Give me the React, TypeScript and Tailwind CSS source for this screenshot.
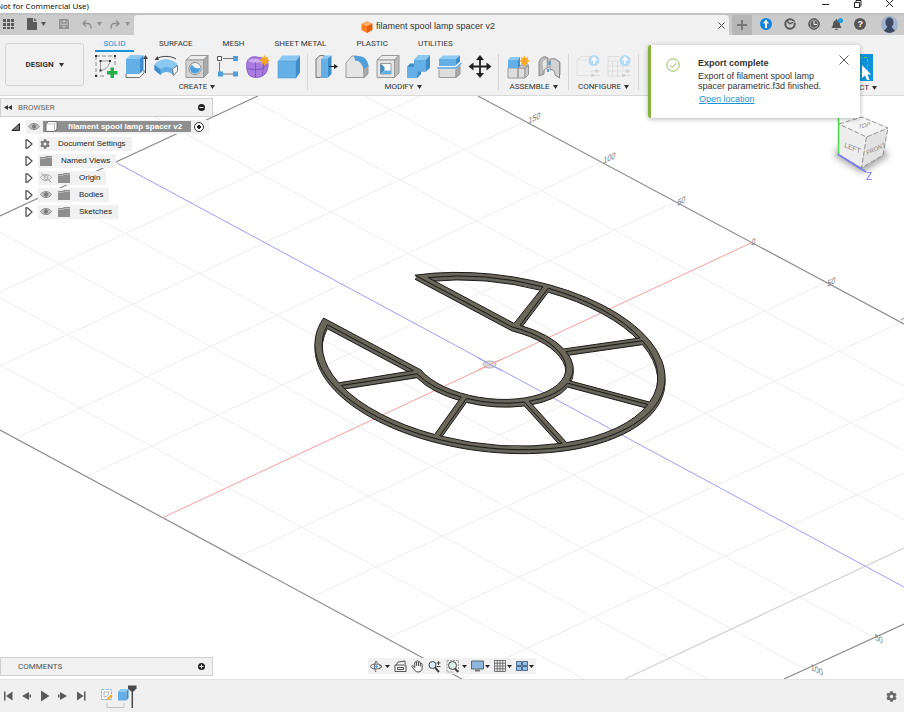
import React from "react";
import { FaBell, FaCog } from "react-icons/fa";

const UI = "font-['Roboto',sans-serif]";

/* ---------- small helpers ---------- */

function Caret() {
  return (
    <svg width="5" height="4" viewBox="0 0 5 4" aria-hidden="true">
      <path d="M0 0H5L2.500 4Z" fill="#333" />
    </svg>
  );
}

function Tool({ label, children }: { label: string; children: React.ReactNode }) {
  return (
    <button aria-label={label} className="flex h-[26px] items-center justify-center">
      <svg width="26" height="26" viewBox="0 0 26 26" fill="none" aria-hidden="true">
        {children}
      </svg>
    </button>
  );
}

function Group({ label, cols, children }: { label: string; cols: string; children: React.ReactNode }) {
  return (
    <section className="flex flex-col items-center">
      <div className={"grid " + cols}>{children}</div>
      <button className="flex h-[14px] items-center gap-[3px] text-[8px] text-[#333]">
        {label}
        <Caret />
      </button>
    </section>
  );
}

function Divider() {
  return <div className="h-[36px] w-px bg-[#d6d6d6]" />;
}

/* ---------- toolbar drawings ---------- */

const sketchIcon = (
  <>
    <path d="M4 2H23V12M4 2V22H14" stroke="#8a8a8a" strokeDasharray="4 2" />
    <path d="M8.500 7H18M8.500 7V16.500C13 16 17 13 18 7" stroke="#999" />
    <path d="M3 1h2v2H3zM22 1h2v2h-2zM3 21h2v2H3z" fill="#333" />
    <path d="M7.500 6h2v2h-2zM17 6h2v2h-2zM7.500 15.500h2v2h-2z" fill="#333" />
    <path d="M18.500 13.500h3.500v3.500h3.500v3.500H22V24h-3.500v-3.500H15V17h3.500z" fill="#27ae4b" />
  </>
);
const extrudeIcon = (
  <>
    <path d="M3 20V23.500H16.500L21 19V16" fill="#f4f4f4" stroke="#777" />
    <path d="M3 5L7 1H20L17 5Z" fill="#8cc9f2" />
    <path d="M3 5H16.500V20H3Z" fill="#64b0e6" />
    <path d="M16.500 5L20.500 1V16L16.500 20Z" fill="#3e8cc8" />
    <path d="M22.500 3.500V19" stroke="#444" />
    <path d="M22.500 1L25 5H20Z" fill="#444" />
  </>
);
const revolveIcon = (
  <>
    <path d="M1.500 11C4 7 9 5.500 13 5.500S22 7 24.500 11V16L20 21C17 17 10 17 7.500 21L1.500 16Z" fill="#64b0e6" />
    <path d="M1.500 11C4 7 9 5.500 13 5.500S22 7 24.500 11L19.500 15C16 12 11 12 7.500 15.500Z" fill="#8cc9f2" />
    <path d="M1.500 11L7.500 15.500V21L1.500 16Z" fill="#3e8cc8" />
    <path d="M19.500 15L24.500 11.500V17L20.500 21.500Z" fill="#fff" stroke="#777" />
    <path d="M3.500 5C8 1.500 18 1.500 23 5" stroke="#444" />
    <path d="M1.500 6L4.500 2L6 6Z" fill="#444" />
  </>
);
const holeIcon = (
  <>
    <path d="M2 6L7 1.500H24L19.500 6Z" fill="#eee" stroke="#999" />
    <path d="M19.500 6L24 1.500V19L19.500 23.500Z" fill="#aaa" stroke="#999" />
    <path d="M2 6H19.500V23.500H2Z" fill="#d4d4d4" stroke="#999" />
    <circle cx="11" cy="14.500" r="6" fill="#f4f4f4" stroke="#888" />
    <path d="M8 10.500A5 5 0 1 0 16 14C12 15 9 13 8 10.500Z" fill="#4d9fdc" />
  </>
);
const patternIcon = (
  <>
    <path d="M8 4.500H19M4.500 8V18M8 20H19" stroke="#777" />
    <path d="M2.500 2.500h4v4h-4z" fill="#fff" stroke="#555" />
    <path d="M18 2h5v5h-5zM3 17.500h5v5H3zM18 17.500h5v5h-5z" fill="#4d9fdc" />
  </>
);
const spark = "l1.200 2.800 2.600-1.400-1 3 3 .9-3 1.300 1 2.900-2.700-1.200-1.100 2.900-1.100-2.900-2.700 1.200 1-2.900-3-1.300 3-.9-1-3 2.600 1.400z";
const formIcon = (
  <>
    <path d="M2 8C3 4 7 2 12 3L22 5C24 10 23 17 20 20C15 25 7 24 4 21C2 18 1 12 2 8Z" fill="#a77be0" stroke="#8f64ca" />
    <path d="M3 7C8 4 14 4 18 8C13 9 8 9 3 7Z" fill="#cdaef3" />
    <path d="M2 14.500C8 16 14 16 18 14.500L22 11M10.500 8.500V23M18 8C19 13 18 18 17 22" stroke="#7a4fb5" strokeWidth=".8" />
    <path d={"M19.500 1" + spark} fill="#f5a623" />
  </>
);
const boxIcon = (
  <>
    <path d="M2 7L6 1.500H24L20 7Z" fill="#8cc9f2" />
    <path d="M2 7H20V24H2Z" fill="#64b0e6" stroke="#4d9fdc" strokeWidth=".6" />
    <path d="M20 7L24 1.500V18.500L20 24Z" fill="#3e8cc8" />
  </>
);
const pressPullIcon = (
  <>
    <path d="M3 5L7 1.500H11V20L7 23.500H3Z" fill="#ddd" stroke="#777" />
    <path d="M8 5L12 1.500H18L15 5Z" fill="#8cc9f2" />
    <path d="M8 5H14.500V24H8Z" fill="#64b0e6" />
    <path d="M14.500 5L18.500 1.500V20L14.500 24Z" fill="#3e8cc8" />
    <path d="M16 12.500H22" stroke="#222" />
    <path d="M25 12.500L21 10V15Z" fill="#222" />
  </>
);
const filletIcon = (
  <>
    <path d="M2 9L8 2H13L20 14V23.500H2Z" fill="#e4e4e4" stroke="#999" />
    <path d="M20 14L24 11V20L20 23.500Z" fill="#aaa" stroke="#999" />
    <path d="M10 2H14C20 2 24 6 24.500 12L19.500 15C19 10 16 7 11 6.500Z" fill="#4d9fdc" />
  </>
);
const shellIcon = (
  <>
    <path d="M2 6L7 1.500H24L19.500 6Z" fill="#eee" stroke="#999" />
    <path d="M19.500 6L24 1.500V19L19.500 23.500Z" fill="#bbb" stroke="#999" />
    <path d="M2 6H19.500V23.500H2Z" fill="#e6e6e6" stroke="#999" />
    <path d="M5.500 9.500H16V20H5.500Z" fill="#fff" stroke="#999" />
    <path d="M5.500 9.500L9.500 13V16.500L5.500 20Z" fill="#3e8cc8" />
    <path d="M5.500 20L9.500 16.500H16V20Z" fill="#64b0e6" />
  </>
);
const combineIcon = (
  <>
    <path d="M2 13L5 9.500H9V6L13 1.500H25V14L21 17.500H16V20L12.500 24H2Z" fill="#3e8cc8" />
    <path d="M2 13H9V6H21V17.500H12.500V24H2Z" fill="#64b0e6" />
    <path d="M9 6L13 1.500H25L21 6Z" fill="#8cc9f2" />
  </>
);
const splitIcon = (
  <>
    <path d="M3 15H20V23.500H3Z" fill="#ddd" stroke="#999" />
    <path d="M20 15L24 12V20L20 23.500Z" fill="#aaa" stroke="#999" />
    <path d="M3 5L7 1.500H24L20 5Z" fill="#8cc9f2" />
    <path d="M3 5H20V12H3Z" fill="#64b0e6" />
    <path d="M20 5L24 1.500V9L20 12Z" fill="#3e8cc8" />
    <path d="M1 14H19L25.500 8.500" stroke="#fff" strokeWidth="3" />
    <path d="M1 14H20L25.500 9" stroke="#4d9fdc" strokeWidth="1.300" />
  </>
);
const moveIcon = (
  <g transform="translate(0 -.5)">
    <path d="M13 5V22M5 13H21" stroke="#222" strokeWidth="1.800" />
    <path d="M13 1.500L17 6.500H9ZM13 24.500L17 19.500H9ZM1.500 13L6.500 9V17ZM24.500 13L19.500 9V17Z" fill="#222" />
  </g>
);
const componentIcon = (
  <>
    <path d="M3 14H13V24H3ZM13 14H20V24H13Z" fill="#dedede" stroke="#999" />
    <path d="M13 14L16 11H23.500L20 14ZM20 14L23.500 11V20.500L20 24Z" fill="#c8c8c8" stroke="#999" />
    <path d="M3 6L5.500 3H15L13 6Z" fill="#8cc9f2" />
    <path d="M3 6H13V14H3Z" fill="#64b0e6" />
    <path d="M13 6L15 3V12L13 14Z" fill="#3e8cc8" />
    <path d={"M19.500 1.500" + spark} fill="#f5a623" />
  </>
);
const jointIcon = (
  <>
    <path d="M3 9C3 5 7 2 10 3L12 4V14C9 14 8 16 8 20L3 22Z" fill="#bdbdbd" stroke="#888" />
    <path d="M6 10C6 7 8 5 11 4V14C8 14 7 17 7 21Z" fill="#e6e6e6" stroke="#999" strokeWidth=".6" />
    <path d="M14 5C18 4 22 6 23.500 9V24L19 21C19 17 17 15 14 16Z" fill="#d2d2d2" stroke="#888" />
    <path d="M18 4L24 8V21" stroke="#999" />
    <path d="M13.500 7V11M12 15V18" stroke="#4d9fdc" strokeWidth="2" />
  </>
);
const badge = (
  <>
    <circle cx="19" cy="6.500" r="5.500" fill="#b5dbf3" />
    <path d="M19 10V4.500M16.500 6.500L19 3.500L21.500 6.500" stroke="#fff" strokeWidth="1.500" />
    <path d="M15 17H25M15 21.500H25" stroke="#d9d9d9" />
    <path d="M20 15.500h3v3h-3zM16 20h3v3h-3z" fill="#d4d4d4" />
  </>
);
const configIcon = (
  <>
    <path d="M2 6L6 2.500H16M2 6V21.500H14M2 6H12" stroke="#e0e0e0" />
    {badge}
  </>
);
const tableIcon = (
  <>
    <path d="M2 2.500H13M2 2.500V22H14M2 7H13M6.500 7V22M11.500 7V22M2 12H24M2 17H14M17 12V15" stroke="#dcdcdc" />
    {badge}
  </>
);

/* ---------- header ---------- */

function TitleBar() {
  return (
    <div className="flex h-[13px] items-start justify-between bg-white">
      <span className="-ml-[3px] whitespace-nowrap font-['Open_Sans',sans-serif] text-[8px] leading-[11px] text-black">
        Not for Commercial Use)
      </span>
      <div className="flex h-[9px] items-center gap-[23px] pr-[10px]">
        <button aria-label="Minimize">
          <svg width="9" height="9"><path d="M1 4.500H8" stroke="#222" /></svg>
        </button>
        <button aria-label="Restore">
          <svg width="9" height="9" fill="none" stroke="#222">
            <path d="M1.500 2.500H6.500V7.500H1.500ZM3 2V.5H8V6H7" />
          </svg>
        </button>
        <button aria-label="Close">
          <svg width="9" height="9"><path d="M1 0L8 7M8 0L1 7" stroke="#222" /></svg>
        </button>
      </div>
    </div>
  );
}

function TabBar() {
  return (
    <div className="flex h-[22px] items-stretch border-t-2 border-[#c2c2c2] bg-[#cbcbcb]">
      <div className="flex w-[134px] shrink-0 items-center pb-[2px] pl-[3px] text-[#555]">
        <button aria-label="Data panel">
          <svg width="12" height="12" viewBox="0 0 12 12" fill="#5a5a5a">
            <path d="M0 1h3v3H0zM4 1h3v3H4zM8 1h3v3H8zM0 5h3v3H0zM4 5h3v3H4zM8 5h3v3H8zM0 9h3v2H0zM4 9h3v2H4zM8 9h3v2H8z" />
          </svg>
        </button>
        <button aria-label="File" className="ml-[12px] flex items-center gap-[4px]">
          <svg width="10" height="12" viewBox="0 0 10 12" fill="#5a5a5a">
            <path d="M0 0H6V4H10V12H0ZM7 0L10 3H7Z" />
          </svg>
          <svg width="5" height="4"><path d="M0 0H5L2.500 4Z" fill="#555" /></svg>
        </button>
        <button aria-label="Save" className="ml-[13px]">
          <svg width="10" height="10" viewBox="0 0 10 10" fill="none" stroke="#909090" strokeWidth="1.500">
            <path d="M.8 .8H8L9.200 2V9.200H.8ZM3 1V4H7V1M2.500 9V6.500H7.500V9" />
          </svg>
        </button>
        <button aria-label="Undo" className="ml-[13px] flex items-center gap-[5px]">
          <svg width="10" height="9" viewBox="0 0 10 9" fill="none" stroke="#909090" strokeWidth="1.500">
            <path d="M4 .5L1 3.500L4 6.500M1 3.500H6C8 3.500 9 5 9 8.500" />
          </svg>
          <svg width="5" height="4"><path d="M0 0H5L2.500 4Z" fill="#909090" /></svg>
        </button>
        <button aria-label="Redo" className="ml-[8px] flex items-center gap-[5px]">
          <svg width="10" height="9" viewBox="0 0 10 9" fill="none" stroke="#909090" strokeWidth="1.500">
            <path d="M6 .5L9 3.500L6 6.500M9 3.500H4C2 3.500 1 5 1 8.500" />
          </svg>
          <svg width="5" height="4"><path d="M0 0H5L2.500 4Z" fill="#909090" /></svg>
        </button>
      </div>
      <div className="flex min-w-0 flex-1 items-center rounded-t-sm bg-[#f1f1f1] pr-[4px]">
        <div className="flex min-w-0 flex-1 items-center justify-center gap-[3px] pl-[4px] pt-[3px]">
          <svg width="12" height="12" viewBox="0 0 12 12">
            <path d="M6 0L11.500 2.500L6 5L.5 2.500Z" fill="#ffae70" />
            <path d="M.5 2.500L6 5V12L.5 9Z" fill="#ff7a1f" />
            <path d="M11.500 2.500L6 5V12L11.500 9Z" fill="#e2600c" />
          </svg>
          <span className="truncate font-['Liberation_Sans',sans-serif] text-[9px] text-[#333]">
            filament spool lamp spacer v2
          </span>
        </div>
        <button aria-label="Close tab">
          <svg width="7" height="7"><path d="M.5 .5L6.500 6.500M6.500 .5L.5 6.500" stroke="#555" /></svg>
        </button>
      </div>
      <div className="flex w-[175px] shrink-0 items-center pl-[3px]">
        <button aria-label="New tab" className="flex h-full w-[20px] items-center justify-center bg-[#b6b6b6]">
          <svg width="10" height="10"><path d="M5 0V10M0 5H10" stroke="#777" strokeWidth="2" /></svg>
        </button>
        <div className="flex flex-1 items-center justify-between pb-[2px] pl-[8px] pr-[6px]">
          <button aria-label="Extensions">
            <svg width="12" height="12" viewBox="0 0 12 12" fill="none">
              <circle cx="6" cy="6" r="6" fill="#1185dd" />
              <path d="M6 10V4" stroke="#fff" strokeWidth="2" />
              <path d="M3 5.500L6 1.500L9 5.500Z" fill="#fff" />
            </svg>
          </button>
          <button aria-label="Job status">
            <svg width="12" height="12" viewBox="0 0 12 12" fill="none">
              <circle cx="6" cy="6" r="4.700" stroke="#555" strokeWidth="2" />
              <path d="M6 6L9 4M3 3L6 6" stroke="#555" strokeWidth="1.500" />
              <path d="M7 3L11.500 4.500" stroke="#cbcbcb" />
            </svg>
          </button>
          <button aria-label="History">
            <svg width="12" height="12" viewBox="0 0 12 12" fill="none">
              <circle cx="6" cy="6" r="5.300" fill="#606060" stroke="#555" />
              <circle cx="6" cy="6" r="4" stroke="#bbb" strokeWidth=".7" />
              <path d="M6 3V6.500H9" stroke="#fff" />
            </svg>
          </button>
          <button aria-label="Notifications" className="relative text-[#555]">
            <FaBell size={11} />
            <span className="absolute -right-px -top-px h-[5px] w-[5px] rounded-full bg-[#1a9be0]" />
          </button>
          <button aria-label="Help" className="flex h-[12px] w-[12px] items-center justify-center rounded-full bg-[#555] font-['Liberation_Sans',sans-serif] text-[9px] font-bold leading-none text-white">
            ?
          </button>
          <button aria-label="Account" className="ml-[3px]">
            <svg width="17" height="17" viewBox="0 0 17 17">
              <defs><clipPath id="av"><circle cx="8.500" cy="8.500" r="8.500" /></clipPath></defs>
              <g clipPath="url(#av)">
                <path d="M0 0H17V17H0Z" fill="#9fb3cc" />
                <ellipse cx="8.500" cy="6.500" rx="4" ry="5" fill="#3d4a63" />
                <path d="M2 17C3 13 6 13 6.500 10H10.500C11 13 14 13 15 17Z" fill="#3d4a63" />
              </g>
            </svg>
          </button>
        </div>
      </div>
    </div>
  );
}

function Ribbon() {
  return (
    <div className={"flex h-[61px] items-start border-b border-[#d9d9d9] bg-[#f1f1f1] " + UI}>
      <button className="ml-[5px] mt-[8px] flex h-[43px] w-[79px] shrink-0 items-center justify-center gap-[5px] rounded-[3px] border border-[#d4d4d4] text-[8px] font-bold text-[#333]">
        DESIGN
        <Caret />
      </button>
      <div className="ml-[6px] mt-[3px] min-w-0 flex-1">
        <nav className="flex h-[14px] gap-[30px] pl-[5px] text-[8px] text-[#333]">
          <button className="-mr-[5px] h-[14px] w-[39px] border-b-2 border-[#1a93d6] text-[#1a93d6]">SOLID</button>
          <button className="h-[12px]">SURFACE</button>
          <button className="h-[12px]">MESH</button>
          <button className="h-[12px] whitespace-nowrap">SHEET METAL</button>
          <button className="h-[12px]">PLASTIC</button>
          <button className="h-[12px]">UTILITIES</button>
        </nav>
        <div className="mt-[2px] flex gap-[3px]">
          <Group label="CREATE" cols="w-[214px] grid-cols-7">
            <Tool label="Create sketch">{sketchIcon}</Tool>
            <Tool label="Extrude">{extrudeIcon}</Tool>
            <Tool label="Revolve">{revolveIcon}</Tool>
            <Tool label="Hole">{holeIcon}</Tool>
            <Tool label="Pattern">{patternIcon}</Tool>
            <Tool label="Create form">{formIcon}</Tool>
            <Tool label="Box">{boxIcon}</Tool>
          </Group>
          <Divider />
          <Group label="MODIFY" cols="w-[184px] grid-cols-6">
            <Tool label="Press pull">{pressPullIcon}</Tool>
            <Tool label="Fillet">{filletIcon}</Tool>
            <Tool label="Shell">{shellIcon}</Tool>
            <Tool label="Combine">{combineIcon}</Tool>
            <Tool label="Split body">{splitIcon}</Tool>
            <Tool label="Move">{moveIcon}</Tool>
          </Group>
          <Divider />
          <Group label="ASSEMBLE" cols="w-[63px] grid-cols-2">
            <Tool label="New component">{componentIcon}</Tool>
            <Tool label="Joint">{jointIcon}</Tool>
          </Group>
          <Divider />
          <Group label="CONFIGURE" cols="w-[63px] grid-cols-2">
            <Tool label="Configure">{configIcon}</Tool>
            <Tool label="Configuration table">{tableIcon}</Tool>
          </Group>
          <Divider />
          <div className="ml-auto pr-[27px]">
            <Group label="SELECT" cols="grid-cols-1">
              <button aria-label="Select" className="h-[27px] w-[28px] bg-[#0f93d8]">
                <svg width="28" height="27" viewBox="0 0 28 27" fill="none">
                  <path d="M4 3.500H22.500V20H4Z" stroke="#58c26b" strokeDasharray="3 2" />
                  <path d="M17 11V24L20 21.500L22 26H24.500L22.500 20.500H26Z" fill="#fff" />
                </svg>
              </button>
            </Group>
          </div>
        </div>
      </div>
    </div>
  );
}

function Toast() {
  return (
    <div
      role="status"
      className="absolute right-[44px] top-[45px] z-20 flex h-[73px] w-[212px] rounded-[3px] border-l-[3px] border-[#86b13c] bg-white font-['Liberation_Sans',sans-serif] text-[9px] text-[#333] shadow-[0_1px_5px_rgba(0,0,0,0.3)]"
    >
      <svg width="14" height="14" viewBox="0 0 14 14" fill="none" stroke="#8fbd55" className="ml-[15px] mt-[13px] shrink-0">
        <circle cx="7" cy="7" r="6.200" />
        <path d="M4 7.300L6.200 9.500L10.200 5" />
      </svg>
      <div className="ml-[18px] mt-[13px] leading-[10px]">
        <p className="font-bold">Export complete</p>
        <p className="mt-[3px] whitespace-nowrap">
          Export of filament spool lamp
          <br />
          spacer parametric.f3d finished.
        </p>
        <a href="#location" className="mt-[3px] inline-block pl-px text-[#1a93d6] underline">
          Open location
        </a>
      </div>
      <button aria-label="Dismiss" className="absolute right-[11px] top-[10px]">
        <svg width="10" height="10"><path d="M.5 .5L9.500 9.500M9.500 .5L.5 9.500" stroke="#555" /></svg>
      </button>
    </div>
  );
}

/* ---------- canvas scene ---------- */

const OUT = 87.6;
const OUT_IN = 84;
const HUB = 38;
const HUB_OUT = 41.6;
const SLOT = 34.6;
const SLOT_OUT = 38.1;
const HALF = 1.35;

const rad = (deg: number) => (deg * Math.PI) / 180;
const polar = (r: number, a: number) => `${(r * Math.cos(a)).toFixed(2)} ${(r * Math.sin(a)).toFixed(2)}`;

function cell(from: number, to: number) {
  const a = rad(from);
  const b = rad(to);
  const o = Math.asin(HALF / OUT_IN);
  const i = Math.asin(HALF / HUB_OUT);
  return (
    `M${polar(OUT_IN, a + o)}A${OUT_IN} ${OUT_IN} 0 0 1 ${polar(OUT_IN, b - o)}` +
    `L${polar(HUB_OUT, b - i)}A${HUB_OUT} ${HUB_OUT} 0 0 0 ${polar(HUB_OUT, a + i)}Z`
  );
}

function endCell(sign: 1 | -1) {
  const a = rad(112) + Math.asin(HALF / OUT_IN);
  const x = OUT_IN * Math.cos(a);
  const y = OUT_IN * Math.sin(a) * sign;
  const far = -Math.sqrt(OUT_IN ** 2 - SLOT_OUT ** 2);
  return `M${x} ${y}A${OUT_IN} ${OUT_IN} 0 0 ${sign === 1 ? 1 : 0} ${far} ${SLOT_OUT * sign}L-17.500 ${SLOT_OUT * sign}Z`;
}

const tipX = -Math.sqrt(OUT ** 2 - SLOT ** 2);
const hubX = -Math.sqrt(HUB ** 2 - SLOT ** 2);
const SPACER =
  `M${tipX} ${-SLOT}A${OUT} ${OUT} 0 1 1 ${tipX} ${SLOT}L${hubX} ${SLOT}` +
  `A${HUB} ${HUB} 0 1 0 ${hubX} ${-SLOT}Z` +
  endCell(-1) + cell(-112, -67) + cell(-67, -22.4) + cell(-22.4, 22.4) + cell(22.4, 67) + cell(67, 112) + endCell(1);

function Layer({ dy, fill, line }: { dy: number; fill: string; line?: boolean }) {
  return (
    <path
      d={SPACER}
      transform={`matrix(1.5 .8 1.32 -.62 490 ${361 + dy})`}
      fill={fill}
      fillRule="evenodd"
      stroke={line ? "#1a1a17" : "none"}
      strokeWidth="1"
      strokeLinejoin="round"
      vectorEffect="non-scaling-stroke"
    />
  );
}

const axisLabels = [
  { x: 528, y: 124, t: "150" },
  { x: 603, y: 164, t: "100" },
  { x: 677, y: 206, t: "50" },
  { x: 751, y: 246, t: "0" },
  { x: 827, y: 287, t: "50" },
];

function Scene() {
  return (
    <svg
      className="absolute inset-0 h-full w-full"
      viewBox="0 96 904 583"
      preserveAspectRatio="xMidYMid slice"
      fill="none"
      aria-label="Model view"
    >
      <g stroke="#eeeeee">
        <path d="M0 292L420 96M0 366L526 121M17 438L601 162M87 476L675 202M238 557L825 283M312 597L904 321M388 638L904 398M463 678L904 473" />
        <path d="M365 96L904 386M244 96L904 451M136 107L904 520M50 193L874 637M0 232L807 670M0 298L708 679M0 365L584 679" />
      </g>
      <path d="M625 679L904 548" stroke="#d2d2d2" strokeWidth="1.200" />
      <path d="M0 216L258 96M0 430L462 679M478 96L904 324M784 679L904 624" stroke="#8c8c8c" strokeWidth="1.200" />
      <path d="M901 320L904 318" stroke="#888" />
      <path d="M117 163L904 587" stroke="#9d9dff" />
      <path d="M163 517.500L753 242" stroke="#ff9d9d" />
      <g fill="#777" className="font-['Liberation_Sans',sans-serif] text-[8px]">
        {axisLabels.map((l) => (
          <text key={l.x} transform={`translate(${l.x} ${l.y}) rotate(-25) skewX(-32)`}>{l.t}</text>
        ))}
        <text transform="translate(875 640) rotate(26) skewX(30)">50</text>
        <text transform="translate(811 670) rotate(26) skewX(30)">100</text>
      </g>
      <ellipse cx="489.500" cy="364.500" rx="6.500" ry="3.500" fill="#ddd" stroke="#b5b5b5" />
      <path d="M478 370L502 359" stroke="#f5a0a0" />
      <path d="M478 358L502 371" stroke="#a0a0f5" />
      <Layer dy={4} fill="#55544c" line />
      <Layer dy={3} fill="#6a695f" />
      <Layer dy={2} fill="#66655c" />
      <Layer dy={1} fill="#5a594f" />
      <Layer dy={0} fill="#6b675b" line />
    </svg>
  );
}

function ViewCube() {
  return (
    <svg
      className="absolute right-[9px] top-[14px] h-[76px] w-[70px]"
      viewBox="825 110 70 76"
      fill="none"
      aria-label="View cube"
    >
      <defs>
        <filter id="soft" x="-40%" y="-40%" width="180%" height="180%"><feGaussianBlur stdDeviation="3" /></filter>
      </defs>
      <path d="M834 156L862 173L889 156L880 145H840Z" fill="#aaa" filter="url(#soft)" />
      <path d="M839 124L862 117L888 128L866.500 137Z" fill="#f4f4f4" />
      <path d="M839 124L866.500 137L861.500 168L837.500 154Z" fill="#ededed" />
      <path d="M888 128L866.500 137L861.500 168L883 155Z" fill="#e2e2e2" />
      <path d="M839 124L862 117L888 128L866.500 137ZM866.500 137L861.500 168L883 155L888 128M861.500 168L837.500 154" stroke="#888" strokeDasharray="5 2" strokeWidth=".9" />
      <path d="M838.500 118V154" stroke="#4be04b" strokeWidth="1.500" />
      <path d="M837.500 154L866 172" stroke="#7b7bf0" strokeWidth="1.500" />
      <g fill="#888" className="font-['Liberation_Sans',sans-serif]">
        <text fontSize="7" transform="translate(844 147) rotate(12) skewY(10)">LEFT</text>
        <text fontSize="6" transform="translate(867 155) rotate(-24) skewX(-10)">FRONT</text>
        <text fontSize="6" transform="translate(858 129) rotate(-12) skewX(-20)">TOP</text>
        <text x="866" y="180" fontSize="10" fill="#7b7bf0">Z</text>
      </g>
    </svg>
  );
}

/* ---------- panels ---------- */

function Eye({ off }: { off?: boolean }) {
  return (
    <svg width="12" height="9" viewBox="0 0 12 9" fill="none" stroke={off ? "#aaa" : "#8c8c8c"}>
      <path d="M.5 4.500C3 .5 9 .5 11.500 4.500C9 8.500 3 8.500 .5 4.500Z" fill={off ? "none" : "#c4c4c4"} />
      <circle cx="6" cy="4.500" r="2" fill={off ? "none" : "#777"} />
      {off && <path d="M1 0L11 9" />}
    </svg>
  );
}

function Folder() {
  return (
    <svg width="12" height="10" viewBox="0 0 12 10" fill="#8e8e8e">
      <path d="M0 1H4.500L6 0H12V10H0Z" />
      <path d="M0 2.500H5L6.500 1.500H12" stroke="#c8c8c8" strokeWidth=".7" fill="none" />
    </svg>
  );
}

function TreeRow({ label, eye, folder = true, gear }: { label: string; eye?: "on" | "off"; folder?: boolean; gear?: boolean }) {
  return (
    <li className="flex h-[17px] items-center">
      <button aria-label={"Expand " + label} className="ml-[25px] w-[13px]">
        <svg width="8" height="10" viewBox="0 0 8 10"><path d="M1 .8H2.500L7 5L2.500 9.200H1Z" fill="#fff" stroke="#444" strokeWidth="1.200" /></svg>
      </button>
      <span className="flex h-[14px] items-center whitespace-nowrap bg-[#f1f1f1] pl-[2px] pr-[6px]">
        {eye && <span className="w-[18px]"><Eye off={eye === "off"} /></span>}
        {gear && <FaCog size={10} className="mr-[8px] text-[#7d7d7d]" />}
        {folder && <span className="mr-[9px]"><Folder /></span>}
        {label}
      </span>
    </li>
  );
}

function Browser() {
  return (
    <aside className="relative w-[213px] pt-[2px] font-['Liberation_Sans',sans-serif] text-[8px] text-[#222]">
      <header className={"flex h-[19px] items-center border border-[#cfcfcf] bg-[#f1f1f1] pl-[3px] pr-[7px] text-[#666] " + UI}>
        <svg width="8" height="5"><path d="M4 0V5L0 2.500ZM8 0V5L4 2.500Z" fill="#333" /></svg>
        <h2 className="ml-[6px] flex-1">BROWSER</h2>
        <button aria-label="Collapse browser">
          <svg width="7" height="7"><circle cx="3.500" cy="3.500" r="3.500" fill="#222" /><path d="M1.500 3.500H5.500" stroke="#fff" /></svg>
        </button>
      </header>
      <ul className="pt-px">
        <li className="flex h-[17px] items-center pl-[11px]">
          <svg width="9" height="8" className="mr-[6px]"><path d="M8.500 .5V7.500H.8Z" fill="#777" stroke="#222" /></svg>
          <div className="flex h-[14px] items-center bg-[#f1f1f1] pl-[2px] pr-[5px]">
            <Eye />
            <div className="ml-[3px] mr-[3px] flex h-[11px] items-center whitespace-nowrap bg-[#8f8f8f] pl-[2px] pr-[9px] font-bold text-white">
              <svg width="13" height="11" viewBox="0 0 13 11" className="mr-[10px]">
                <path d="M1 3L3.500 .5H12V8L9.500 10.500H1Z" fill="#fff" stroke="#555" strokeWidth=".8" />
                <path d="M1 3H9.500V10.500M9.500 3L12 .5" fill="none" stroke="#aaa" strokeWidth=".8" />
              </svg>
              filament spool lamp spacer v2
            </div>
            <input
              type="radio"
              defaultChecked
              aria-label="Activate component"
              className="h-[10px] w-[10px] appearance-none rounded-full border border-[#333] bg-[radial-gradient(circle,#222_0_2px,#fff_2px)]"
            />
          </div>
        </li>
        <TreeRow label="Document Settings" gear folder={false} />
        <TreeRow label="Named Views" />
        <TreeRow label="Origin" eye="off" />
        <TreeRow label="Bodies" eye="on" />
        <TreeRow label="Sketches" eye="on" />
      </ul>
    </aside>
  );
}

function SmallCaret() {
  return <svg width="5" height="3"><path d="M0 0H5L2.500 3Z" fill="#222" /></svg>;
}

function NavBar() {
  return (
    <div className="absolute bottom-[5px] left-1/2 flex h-[16px] w-[168px] -translate-x-1/2 items-center justify-between bg-[#f1f1f1] px-[2px]">
      <button aria-label="Orbit" className="flex items-center gap-[2px]">
        <svg width="13" height="13" viewBox="0 0 13 13" fill="none" stroke="#555" strokeWidth=".9">
          <ellipse cx="6" cy="6.500" rx="5.500" ry="2.500" />
          <path d="M6 1C4 4 4 9 6 12M6 1L8 3.500M9 5L12 6.500L9 8.500" />
          <circle cx="6.500" cy="6.500" r="1" fill="#4d9fdc" stroke="#4d9fdc" />
        </svg>
        <SmallCaret />
      </button>
      <button aria-label="Look at">
        <svg width="13" height="12" viewBox="0 0 13 12" fill="none" stroke="#555">
          <path d="M1 5H12V11.500H1ZM3.500 7.500H9.500V9.500H3.500ZM2 5L4 2L11 1V4" />
        </svg>
      </button>
      <button aria-label="Pan">
        <svg width="13" height="13" viewBox="0 0 24 24" fill="#fff" stroke="#444" strokeWidth="1.800">
          <path d="M7 14V5a1.700 1.700 0 0 1 3.400 0V3a1.700 1.700 0 0 1 3.400 0v2a1.700 1.700 0 0 1 3.400 0v3a1.600 1.600 0 0 1 3.300 0V15c0 4-3 7-6 7h-2c-3 0-5-2-7-5l-4-5c0-2 2-2 3-1ZM10.400 5v6M13.800 5v6M17.200 8v4" />
        </svg>
      </button>
      <button aria-label="Zoom">
        <svg width="13" height="13" viewBox="0 0 13 13" fill="none" stroke="#444">
          <circle cx="4.500" cy="5" r="3.500" fill="#dcebf5" /><path d="M7 7.500L11 12" strokeWidth="2" /><path d="M8.500 3H12.500M10.500 1V5M8.500 6.500H12.500" />
        </svg>
      </button>
      <button aria-label="Zoom window" className="flex items-center gap-[2px]">
        <svg width="14" height="13" viewBox="0 0 14 13" fill="none" stroke="#444">
          <path d="M1 .5H12.500V12M1 .5V12H8" strokeDasharray="2 1" stroke="#999" />
          <circle cx="6.500" cy="5.500" r="4" fill="#dff0ea" /><path d="M9 8.500L12 12" strokeWidth="2" />
        </svg>
        <SmallCaret />
      </button>
      <button aria-label="Display settings" className="flex items-center gap-px">
        <svg width="13" height="12" viewBox="0 0 13 12"><path d="M.5 1H12.500V9H.5Z" fill="#8fb6e0" stroke="#566" /><path d="M4 9.500H9V11.500H4Z" fill="#777" /></svg>
        <SmallCaret />
      </button>
      <button aria-label="Grid settings" className="flex items-center gap-px">
        <svg width="12" height="12" viewBox="0 0 12 12" fill="none" stroke="#666" strokeWidth=".9">
          <path d="M.5 .5H11.500V11.500H.5ZM3.250 .5V11.500M6 .5V11.500M8.750 .5V11.500M.5 3.250H11.500M.5 6H11.500M.5 8.750H11.500" />
        </svg>
        <SmallCaret />
      </button>
      <button aria-label="Viewports" className="flex items-center gap-px">
        <svg width="12" height="10" viewBox="0 0 12 10"><path d="M.5 .5H5.500V4.500H.5ZM6.500 .5H11.500V4.500H6.500ZM.5 5.500H5.500V9.500H.5ZM6.500 5.500H11.500V9.500H6.500Z" fill="#9cc3ea" stroke="#4a6a90" /></svg>
        <SmallCaret />
      </button>
    </div>
  );
}

function Comments() {
  return (
    <section className={"absolute bottom-[3px] left-0 flex h-[19px] w-[213px] items-center border border-[#cfcfcf] bg-[#f1f1f1] pl-[17px] pr-[7px] text-[8px] text-[#555] " + UI}>
      <h2 className="flex-1">COMMENTS</h2>
      <button aria-label="Add comment">
        <svg width="7" height="7"><circle cx="3.500" cy="3.500" r="3.500" fill="#222" /><path d="M1.500 3.500H5.500M3.500 1.500V5.500" stroke="#fff" /></svg>
      </button>
    </section>
  );
}

function Timeline() {
  return (
    <footer className="flex h-[33px] items-center border-t border-[#e2e2e2] bg-[#f0f0f0] pl-[4px] pr-[7px] text-[#5a5a5a]">
      <div className="flex w-[96px] items-center gap-[8px]">
        {[
          ["Go to start", "M0 0H1.500V9H0ZM8.500 0V9L2 4.500Z"],
          ["Step back", "M7 .5V8.500L0 4.500ZM7.500 3H9V6H7.500Z"],
          ["Play", "M1 -1L9.500 4.500L1 10Z"],
          ["Step forward", "M0 3H1.500V6H0ZM2 .5V8.500L9 4.500Z"],
          ["Go to end", "M1 0V9L7.500 4.500ZM8 0H9.500V9H8Z"],
        ].map(([label, d]) => (
          <button key={label} aria-label={label}>
            <svg width="10" height="12" viewBox="0 -1.500 10 12" fill="#5a5a5a"><path d={d} /></svg>
          </button>
        ))}
      </div>
      <svg width="40" height="26" viewBox="0 0 40 26" fill="none" className="mt-px">
        <path d="M1.500 5.500H11.500V15.500H1.500Z" fill="#fff" stroke="#8ab4d8" strokeDasharray="3 1" />
        <path d="M4 8H9C9 11 7 13 4 13Z" stroke="#99a" strokeWidth=".8" />
        <path d="M6 15.500L11 10.500L12.500 12L8 16Z" fill="#f5a623" />
        <path d="M18 7.500L20.500 5H28.500L26.500 7.500Z" fill="#8cc9f2" />
        <path d="M18 7.500H26.500V16.500H18Z" fill="#64b0e6" />
        <path d="M26.500 7.500L28.500 5V14L26.500 16.500Z" fill="#3e8cc8" />
        <path d="M28 1.500H36.500V4.500L33.500 7.500H31L28 4.500Z" fill="#4a4a4a" />
        <path d="M32.300 6V24" stroke="#4a4a4a" strokeWidth="1.500" />
        <path d="M7 19V23.500H24V19" stroke="#c2c2c2" />
      </svg>
      <button aria-label="Timeline settings" className="ml-auto">
        <FaCog size={11} className="text-[#6a6a6a]" />
      </button>
    </footer>
  );
}

export default function App() {
  return (
    <div className="relative flex h-screen flex-col overflow-hidden bg-white">
      <TitleBar />
      <TabBar />
      <Ribbon />
      <Toast />
      <main className="relative min-h-0 flex-1 overflow-hidden bg-white">
        <Scene />
        <Browser />
        <ViewCube />
        <Comments />
        <NavBar />
      </main>
      <Timeline />
    </div>
  );
}
